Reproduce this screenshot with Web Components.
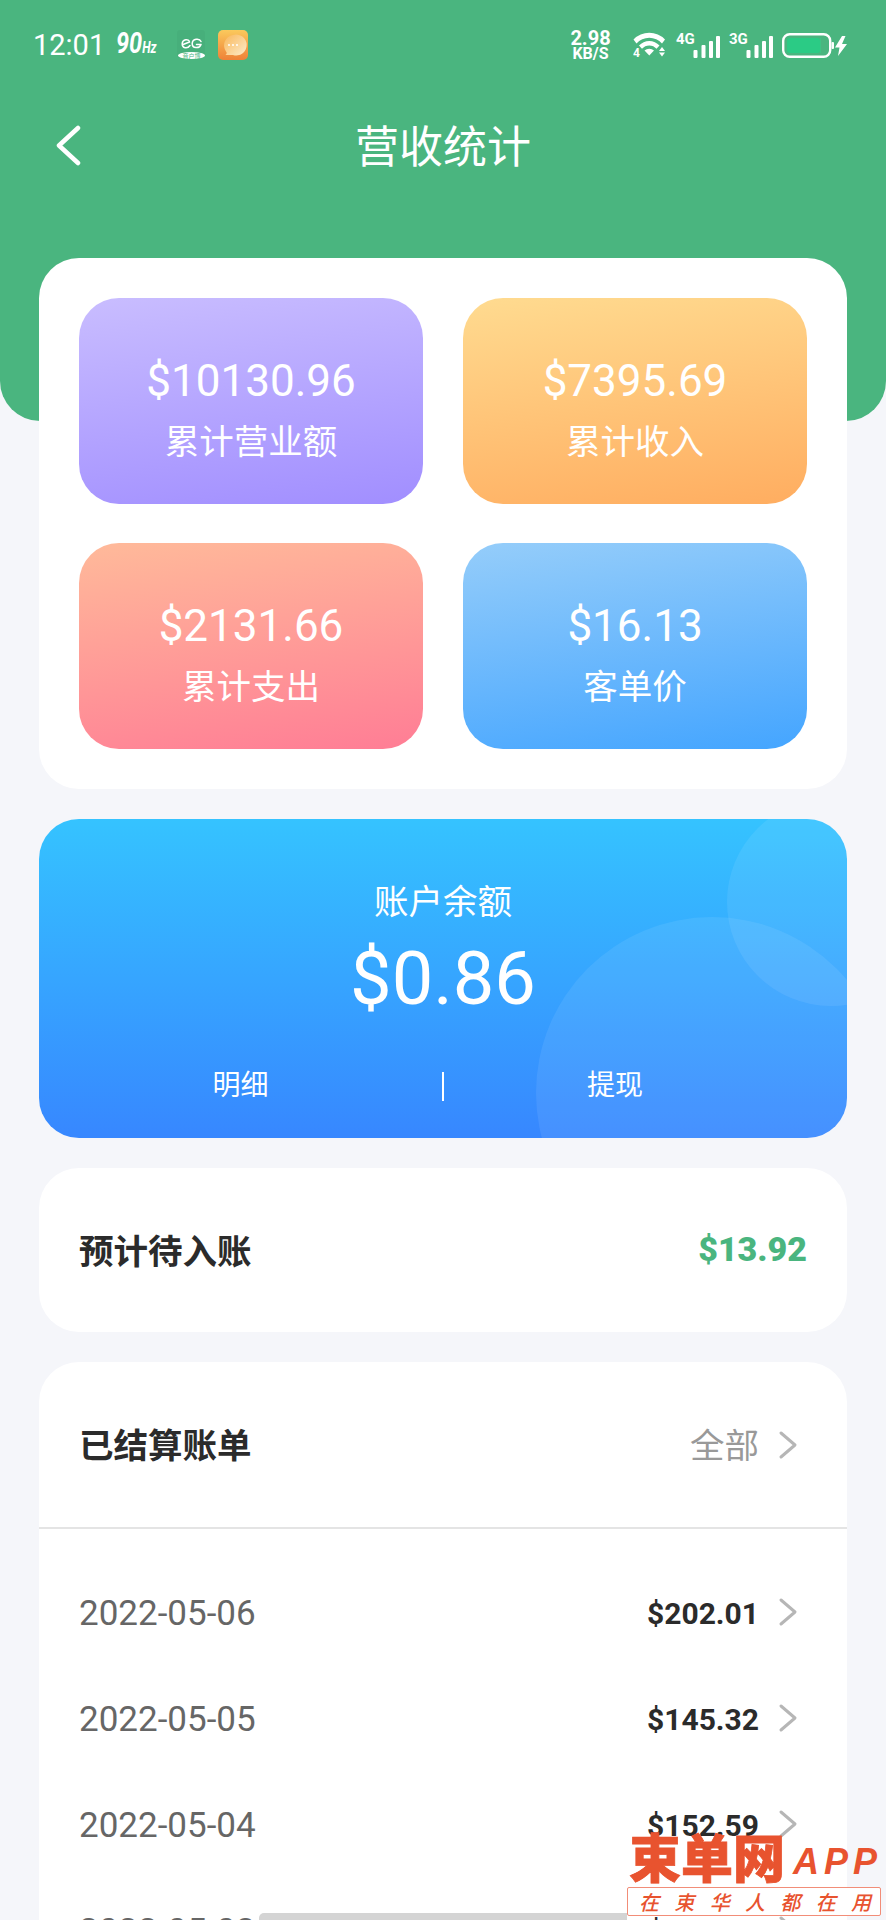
<!DOCTYPE html>
<html lang="en">
<head>
<meta charset="UTF-8">
<meta name="viewport" content="width=device-width, initial-scale=1.0">
<title>营收统计</title>
<style>
    html, body { margin: 0; padding: 0; background: #f5f6fa; }
    body { font-family: Roboto, "Noto Sans CJK SC", sans-serif; }
</style>
</head>
<body>
<revenue-page>
    <status-bar slot="top"></status-bar>
    <app-header slot="top" heading="营收统计"></app-header>

    <white-card pad="40px">
        <div style="display:grid;grid-template-columns:344px 344px;gap:39px 40px">
            <stat-tile value="$10130.96" label="累计营业额" from="#c9bdff" to="#a18eff"></stat-tile>
            <stat-tile value="$7395.69" label="累计收入" from="#ffdb90" to="#ffad60"></stat-tile>
            <stat-tile value="$2131.66" label="累计支出" from="#ffba9a" to="#ff7d95"></stat-tile>
            <stat-tile value="$16.13" label="客单价" from="#95cdfa" to="#44a5ff"></stat-tile>
        </div>
    </white-card>

    <balance-card value="$0.86"></balance-card>

    <pending-card value="$13.92"></pending-card>

    <bill-list>
        <bill-row date="2022-05-06" amount="$202.01"></bill-row>
        <bill-row date="2022-05-05" amount="$145.32"></bill-row>
        <bill-row date="2022-05-04" amount="$152.59"></bill-row>
        <bill-row date="2022-05-03" amount="$111.87"></bill-row>
    </bill-list>

    <home-bar slot="over"></home-bar>
    <site-mark slot="over"></site-mark>
</revenue-page>

<script>
    const CHEVRON = '<svg width="20" height="30" viewBox="0 0 20 30"><path d="M3 3 L17 15 L3 27" fill="none" stroke="#b6b6b6" stroke-width="3" stroke-linecap="round" stroke-linejoin="round"/></svg>';

    // small helper so every element gets an open shadow root from a string
    class Base extends HTMLElement {
        connectedCallback() {
            if (!this.shadowRoot) {
                this.attachShadow({ mode: 'open' });
                this.shadowRoot.innerHTML = this.render();
            }
        }
        attr(name, fallback = '') {
            return this.getAttribute(name) || fallback;
        }
    }

    class RevenuePage extends Base {
        render() {
            return `
                <style>
                    :host { display: block; position: relative; width: 886px; height: 1920px; overflow: hidden; background: #f5f6fa; }
                    .top { height: 421px; margin-bottom: -163px; background: #4ab57f; border-radius: 0 0 40px 40px; overflow: hidden; }
                    .cards { display: flex; flex-direction: column; gap: 30px; padding: 0 39px; }
                </style>
                <div class="top"><slot name="top"></slot></div>
                <div class="cards"><slot></slot></div>
                <slot name="over"></slot>
            `;
        }
    }

    class StatusBar extends Base {
        render() {
            const bars = '<svg width="28" height="24" viewBox="0 0 28 24" fill="#fff"><rect x="0.5" y="16" width="4" height="8" rx="1"/><rect x="8.5" y="11" width="4" height="13" rx="1"/><rect x="16" y="7" width="4" height="17" rx="1"/><rect x="23" y="2" width="4" height="22" rx="1"/></svg>';
            return `
                <style>
                    :host { display: flex; align-items: center; height: 30px; padding: 30px 0 0 33px; color: #fff; font-family: Roboto, sans-serif; }
                    .time { font-size: 29px; width: 83px; line-height: 30px; }
                    .hz { width: 60px; }
                    .hz span { display: inline-block; font-size: 27px; font-weight: 700; font-style: italic; line-height: 30px; transform: scale(.87, 1.12); transform-origin: left center; white-space: nowrap; }
                    .hz small { font-size: 14px; }
                    .apps { display: flex; gap: 12px; }
                    .speed { margin-left: 321px; width: 43px; text-align: center; font-weight: 700; }
                    .speed div:first-child { font-size: 20px; line-height: 16px; }
                    .speed div:last-child { font-size: 16px; line-height: 15px; }
                    .wifi { margin-left: 21px; }
                    .sig { display: flex; align-items: flex-end; margin-top: 2px; font-size: 15px; font-weight: 700; }
                    .sig span { width: 17px; align-self: flex-start; line-height: 14px; margin-top: -2px; }
                    .batt { margin-left: 8px; margin-top: 1px; }
                </style>
                <span class="time">12:01</span>
                <div class="hz"><span>90<small>Hz</small></span></div>
                <span class="apps">
                    <svg width="30" height="30" viewBox="0 0 30 30">
                        <rect x="1" width="28" height="28" rx="3" fill="#000" opacity=".03"/>
                        <path d="M7 14.5 L13.5 12 C13 8.5 6.5 9 6.2 13.5 C6 18.5 11.5 19 14 15.5 M25 11.5 C23.5 8 16.5 8.5 16.2 13.5 C16 18.5 23.5 19 25 14.5 L20.5 14.5" fill="none" stroke="#fff" stroke-width="1.5" stroke-linecap="round" stroke-linejoin="round"/>
                        <ellipse cx="15.5" cy="25.5" rx="13.5" ry="3.5" fill="#fff"/>
                        <text x="15.5" y="28" font-size="6" fill="#4ab57f" text-anchor="middle" font-family="Noto Sans CJK SC">音户博</text>
                    </svg>
                    <svg width="30" height="30" viewBox="0 0 30 30">
                        <defs>
                            <linearGradient id="ob" x1="0" y1="0" x2="0" y2="1"><stop offset="0" stop-color="#fbc95c"/><stop offset="1" stop-color="#ee8138"/></linearGradient>
                            <linearGradient id="bb" x1="0" y1="0" x2="1" y2="1"><stop offset="0" stop-color="#f9b75a"/><stop offset="1" stop-color="#fdeccb"/></linearGradient>
                        </defs>
                        <rect width="30" height="30" rx="5" fill="url(#ob)"/>
                        <path d="M15 5 A10.5 10.5 0 1 1 15 25 L7.5 25 C9 23.5 9 22.5 8 21.5 A10.5 10.5 0 0 1 15 5Z" fill="url(#bb)"/>
                        <circle cx="11" cy="15" r="1" fill="#fff"/><circle cx="15" cy="15" r="1" fill="#fff"/><circle cx="19" cy="15" r="1" fill="#fff"/>
                    </svg>
                </span>
                <span class="speed"><div>2.98</div><div>KB/S</div></span>
                <svg class="wifi" width="33" height="26" viewBox="0 0 33 26">
                    <path d="M0.5 7.5 A22 22 0 0 1 32 7.5 L29 11.5 A17 17 0 0 0 3.5 11.5 Z M6 13.5 A14 14 0 0 1 26.5 13.5 L23.5 16.8 A9.5 9.5 0 0 0 9 16.8 Z M11.5 18.5 A7 7 0 0 1 21 18.5 L16.3 23.5 Z" fill="#fff"/>
                    <text x="0" y="25" font-size="12" font-weight="700" fill="#fff" font-family="Roboto">4</text>
                    <path d="M29 15 L32 19 L26 19 Z M26 20.5 L32 20.5 L29 24.5 Z" fill="#fff"/>
                </svg>
                <span class="sig" style="margin-left:10px"><span>4G</span>${bars}</span>
                <span class="sig" style="margin-left:8px"><span>3G</span>${bars}</span>
                <svg class="batt" width="66" height="26" viewBox="0 0 66 26">
                    <rect x="1.2" y="1.2" width="47" height="22.6" rx="6.5" fill="none" stroke="#fff" stroke-width="2.4"/>
                    <rect x="5" y="5" width="33" height="15" rx="2.5" fill="#2bcb85"/>
                    <rect x="38" y="5" width="1" height="15" fill="#3fc384"/>
                    <rect x="49.5" y="9" width="2.5" height="7" rx="1" fill="#fff"/>
                    <path d="M60 3 L53 14.5 L57.5 14.5 L56 23 L65 11 L60 11 L63.5 3 Z" fill="#fff"/>
                </svg>
            `;
        }
    }

    class AppHeader extends Base {
        render() {
            return `
                <style>
                    :host { display: flex; align-items: center; justify-content: center; position: relative; height: 60px; margin-top: 56px; color: #fff; font-family: Roboto, "Noto Sans CJK SC", sans-serif; font-size: 44px; }
                    svg { position: absolute; left: 54px; top: 9px; }
                    span { margin-top: -5px; }
                </style>
                <svg width="30" height="44" viewBox="0 0 30 44"><path d="M24 3 L5 20.5 L24 38" fill="none" stroke="#fff" stroke-width="4.5" stroke-linecap="round" stroke-linejoin="round"/></svg>
                <span>${this.attr('heading')}</span>
            `;
        }
    }

    class WhiteCard extends Base {
        render() {
            return `
                <style>
                    :host { display: block; background: #fff; border-radius: 40px; padding: ${this.attr('pad', '0')}; }
                </style>
                <slot></slot>
            `;
        }
    }

    class StatTile extends Base {
        render() {
            return `
                <style>
                    :host { display: flex; flex-direction: column; align-items: center; height: 206px; border-radius: 40px; color: #fff; font-family: Roboto, "Noto Sans CJK SC", sans-serif; background: linear-gradient(172deg, ${this.attr('from')}, ${this.attr('to')}); }
                    .v { font-size: 44px; line-height: 50px; margin-top: 58px; }
                    .l { font-size: 34.5px; line-height: 48px; margin-top: 12px; }
                </style>
                <div class="v">${this.attr('value')}</div>
                <div class="l">${this.attr('label')}</div>
            `;
        }
    }

    class BalanceCard extends Base {
        render() {
            return `
                <style>
                    :host { display: flex; flex-direction: column; align-items: center; position: relative; overflow: hidden; height: 319px; border-radius: 40px; color: #fff; font-family: Roboto, "Noto Sans CJK SC", sans-serif; background: linear-gradient(180deg, #35c3ff, #3787ff); }
                    .c1, .c2 { position: absolute; border-radius: 50%; background: rgba(255,255,255,.08); }
                    .c1 { left: 688px; top: -21px; width: 208px; height: 208px; }
                    .c2 { left: 497px; top: 98px; width: 352px; height: 352px; }
                    .l { font-size: 34.5px; line-height: 48px; margin-top: 59px; position: relative; }
                    .v { font-size: 74px; line-height: 84px; margin-top: 11px; position: relative; }
                    .act { display: flex; align-items: center; align-self: stretch; margin-top: 45px; font-size: 28px; position: relative; }
                    .act span { text-align: center; line-height: 40px; }
                    .act span:first-child { width: 403px; }
                    .act span:last-child { width: 342px; }
                    .act i { width: 2px; height: 29px; background: #fff; }
                </style>
                <div class="c1"></div><div class="c2"></div>
                <div class="l">账户余额</div>
                <div class="v">${this.attr('value')}</div>
                <div class="act"><span>明细</span><i></i><span>提现</span></div>
            `;
        }
    }

    class PendingCard extends Base {
        render() {
            return `
                <style>
                    :host { display: flex; align-items: center; justify-content: space-between; height: 164px; padding: 0 40px; background: #fff; border-radius: 40px; font-family: Roboto, "Noto Sans CJK SC", sans-serif; font-weight: 700; font-size: 34.5px; color: #2b2b2b; }
                    span { margin-top: -2px; }
                    b { color: #4ab57f; font-size: 34px; margin-top: -2px; }
                </style>
                <span>预计待入账</span><b>${this.attr('value')}</b>
            `;
        }
    }

    class BillList extends Base {
        render() {
            return `
                <style>
                    :host { display: block; background: #fff; border-radius: 40px; font-family: Roboto, "Noto Sans CJK SC", sans-serif; }
                    .head { display: flex; align-items: center; height: 165px; padding: 0 49px 0 40px; border-bottom: 2px solid #e4e4e4; }
                    .head b { flex: 1; font-size: 34.5px; color: #2b2b2b; margin-top: -4px; }
                    .head span { font-size: 34.5px; color: #999; margin-right: 19px; margin-top: -4px; }
                    svg { display: block; }
                    .rows { padding-top: 32px; }
                </style>
                <div class="head"><b>已结算账单</b><span>全部</span>${CHEVRON}</div>
                <div class="rows"><slot></slot></div>
            `;
        }
    }

    class BillRow extends Base {
        render() {
            return `
                <style>
                    :host { display: flex; align-items: center; height: 106px; padding: 0 49px 0 40px; }
                    .d { flex: 1; font-size: 35px; color: #666; margin-top: -2px; }
                    .a { font-size: 30px; font-weight: 700; color: #2b2b2b; margin-right: 19px; margin-top: -2px; }
                    svg { display: block; margin-top: -4px; }
                </style>
                <span class="d">${this.attr('date')}</span>
                <span class="a">${this.attr('amount')}</span>
                ${CHEVRON}
            `;
        }
    }

    class HomeBar extends Base {
        render() {
            return `
                <style>
                    :host { display: block; position: absolute; left: 259px; bottom: 0; width: 368px; height: 7px; background: #d4d4d4; border-radius: 5px 0 0 0; }
                </style>
            `;
        }
    }

    class SiteMark extends Base {
        render() {
            return `
                <style>
                    :host { display: block; position: absolute; left: 627px; top: 1828px; width: 254px; color: #e8532f; font-family: "Noto Sans CJK SC", sans-serif; }
                    .big { display: flex; align-items: center; height: 56px; font-size: 52px; font-weight: 900; line-height: 56px; padding-left: 2px; white-space: nowrap; -webkit-text-stroke: .8px #e8532f; }
                    .big em { font-family: "Liberation Sans", sans-serif; font-size: 36px; font-weight: 700; letter-spacing: 5px; margin-left: 8px; margin-top: 12px; -webkit-text-stroke: 0; }
                    .sub { display: flex; justify-content: space-between; box-sizing: border-box; height: 29px; margin-top: 3px; padding: 0 9px 0 11px; background: #fff; border: 1px solid #f28d78; border-radius: 2px; font-size: 20px; line-height: 27px; font-style: italic; font-weight: 500; }
                </style>
                <div class="big"><span>束单网</span><em>APP</em></div>
                <div class="sub"><span>在</span><span>束</span><span>华</span><span>人</span><span>都</span><span>在</span><span>用</span></div>
            `;
        }
    }

    customElements.define('revenue-page', RevenuePage);
    customElements.define('status-bar', StatusBar);
    customElements.define('app-header', AppHeader);
    customElements.define('white-card', WhiteCard);
    customElements.define('stat-tile', StatTile);
    customElements.define('balance-card', BalanceCard);
    customElements.define('pending-card', PendingCard);
    customElements.define('bill-list', BillList);
    customElements.define('bill-row', BillRow);
    customElements.define('home-bar', HomeBar);
    customElements.define('site-mark', SiteMark);
</script>
</body>
</html>
